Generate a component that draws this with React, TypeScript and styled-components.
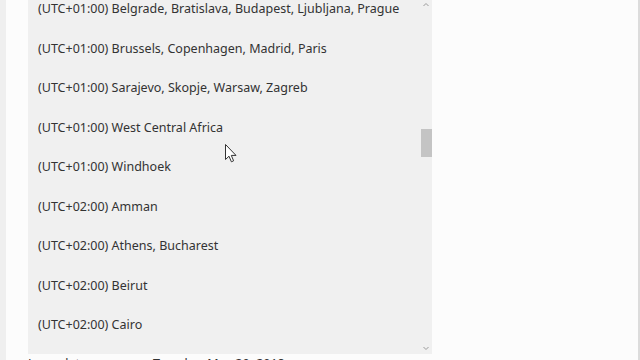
import React from 'react';
import styled, { createGlobalStyle } from 'styled-components';

const GlobalStyle = createGlobalStyle`
  html, body {
    margin: 0;
    padding: 0;
    width: 640px;
    height: 360px;
    overflow: hidden;
    background: #fcfcfc;
    font-family: 'Noto Sans', 'Open Sans', sans-serif;
  }
`;

const zones = [
  '(UTC+01:00) Belgrade, Bratislava, Budapest, Ljubljana, Prague',
  '(UTC+01:00) Brussels, Copenhagen, Madrid, Paris',
  '(UTC+01:00) Sarajevo, Skopje, Warsaw, Zagreb',
  '(UTC+01:00) West Central Africa',
  '(UTC+01:00) Windhoek',
  '(UTC+02:00) Amman',
  '(UTC+02:00) Athens, Bucharest',
  '(UTC+02:00) Beirut',
  '(UTC+02:00) Cairo',
];

const Screen = styled.div`
  position: relative;
  display: flex;
  width: 640px;
  height: 360px;
  overflow: hidden;
  box-sizing: border-box;
  border-right: 2px solid #dcdcdc;
`;

const SideStrip = styled.div`
  width: 6px;
  flex: none;
  background: #efefef;
`;

const Content = styled.div`
  flex: 1;
  display: flex;
  flex-direction: column;
  padding-left: 22px;
`;

const Dropdown = styled.div`
  position: relative;
  width: 404px;
  height: 354px;
  flex: none;
  background: #f0f0f0;
  overflow: hidden;
`;

const List = styled.ul`
  list-style: none;
  margin: -11px 0 0;
  padding: 0;
`;

const Item = styled.li`
  height: 39.5px;
  display: flex;
  align-items: center;
  padding-left: 10px;
  font-size: 12.5px;
  color: #333333;
  white-space: nowrap;
`;

const ScrollTrack = styled.div`
  position: absolute;
  top: 0;
  right: 0;
  width: 12px;
  height: 100%;
`;

const Arrow = styled.div<{ $down?: boolean }>`
  position: absolute;
  left: 3px;
  ${(p) => (p.$down ? 'bottom: 3px;' : 'top: 2px;')}
  width: 6px;
  height: 5px;
  display: flex;
`;

const Thumb = styled.div`
  position: absolute;
  top: 129px;
  left: 1px;
  width: 11px;
  height: 28px;
  background: #c4c4c4;
`;

const Below = styled.div`
  display: flex;
  padding-top: 1px;
  font-size: 12.5px;
  color: #333333;
  white-space: nowrap;
`;

const BelowLabel = styled.span`
  width: 125px;
`;

const Cursor = styled.svg`
  position: absolute;
  left: 225px;
  top: 144px;
`;

export default function App() {
  return (
    <>
      <GlobalStyle />
      <Screen>
        <SideStrip />
        <Content>
          <Dropdown>
            <List>
              {zones.map((z) => (
                <Item key={z}>{z}</Item>
              ))}
            </List>
            <ScrollTrack>
              <Arrow>
                <svg width="6" height="5" viewBox="0 0 6 5">
                  <path d="M0.5 4 L3 1.5 L5.5 4" fill="none" stroke="#9a9a9a" strokeWidth="1" />
                </svg>
              </Arrow>
              <Thumb />
              <Arrow $down>
                <svg width="6" height="5" viewBox="0 0 6 5">
                  <path d="M0.5 1 L3 3.5 L5.5 1" fill="none" stroke="#9a9a9a" strokeWidth="1" />
                </svg>
              </Arrow>
            </ScrollTrack>
          </Dropdown>
          <Below>
            <BelowLabel>Long date</BelowLabel>
            <span>Tuesday, May 29, 2018</span>
          </Below>
        </Content>
        <Cursor width="12" height="19" viewBox="0 0 12 19">
          <path
            d="M0.5 0.5 L0.5 15.5 L4 12.2 L6.4 17.8 L8.6 16.8 L6.3 11.4 L11 11.4 Z"
            fill="#ffffff"
            stroke="#333333"
            strokeWidth="1"
            strokeLinejoin="round"
          />
        </Cursor>
      </Screen>
    </>
  );
}
